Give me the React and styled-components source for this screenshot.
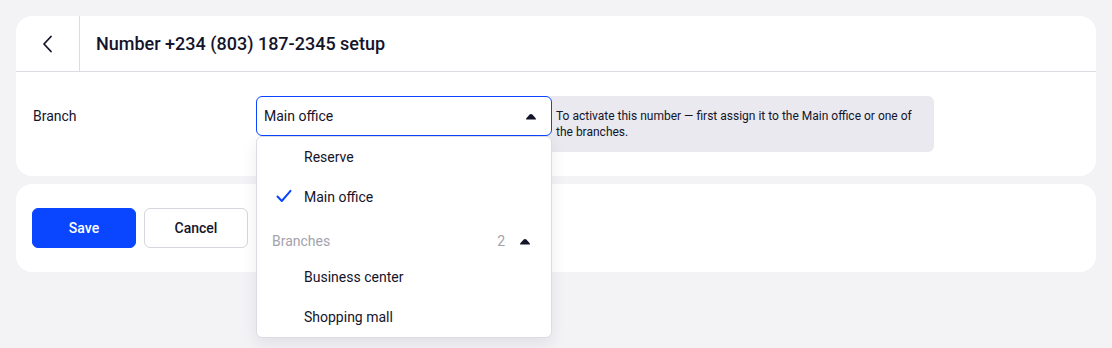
import React from 'react';
import styled, { createGlobalStyle } from 'styled-components';

const GlobalStyle = createGlobalStyle`
  html, body {
    margin: 0;
    padding: 0;
    background: #f3f3f6;
    font-family: Roboto, "Liberation Sans", sans-serif;
    color: #14142b;
  }
  * { box-sizing: border-box; }
`;

const Page = styled.div`
  min-height: 100vh;
  padding: 16px;
  display: flex;
  flex-direction: column;
  gap: 8px;
`;

const Card = styled.div`
  background: #ffffff;
  border-radius: 16px;
`;

const Header = styled.div`
  display: flex;
  align-items: stretch;
  height: 56px;
  border-bottom: 1px solid #dcdce2;
`;

const BackButton = styled.button`
  width: 64px;
  border: none;
  border-right: 1px solid #dcdce2;
  background: transparent;
  display: flex;
  align-items: center;
  justify-content: center;
  padding: 0;
  cursor: pointer;
  color: #14142b;
`;

const Title = styled.h1`
  margin: 0;
  padding-left: 16px;
  display: flex;
  align-items: center;
  font-size: 18px;
  font-weight: 500;
  color: #14142b;
`;

const Body = styled.div`
  padding: 24px 16px;
  display: flex;
  align-items: flex-start;
`;

const Label = styled.div`
  width: 224px;
  padding-left: 1px;
  height: 40px;
  display: flex;
  align-items: center;
  font-size: 14px;
`;

const SelectWrap = styled.div`
  position: relative;
  width: 296px;
  z-index: 2;
`;

const SelectBox = styled.div`
  height: 40px;
  border: 1px solid #0a46ff;
  border-radius: 6px;
  background: #ffffff;
  display: flex;
  align-items: center;
  justify-content: space-between;
  padding: 0 14px 0 7px;
  font-size: 14px;
`;

const Menu = styled.div`
  position: absolute;
  top: 40px;
  left: 0;
  width: 296px;
  background: #ffffff;
  border: 1px solid #dcdce2;
  border-radius: 6px;
  box-shadow: 0 6px 16px rgba(20, 20, 43, 0.08);
`;

const Option = styled.div`
  height: 40px;
  display: flex;
  align-items: center;
  padding-left: 47px;
  position: relative;
  font-size: 14px;
  color: #14142b;
`;

const Check = styled.span`
  position: absolute;
  left: 19px;
  top: 12px;
  display: flex;
`;

const GroupHeader = styled.div`
  margin-top: 8px;
  height: 32px;
  display: flex;
  align-items: center;
  padding: 0 20px 0 15px;
  font-size: 14px;
  color: #a3a3ae;
`;

const GroupName = styled.span`
  flex: 1;
`;

const GroupCount = styled.span`
  margin-right: 14px;
`;

const Info = styled.div`
  width: 389px;
  margin-left: -7px;
  padding: 12px 16px 12px 11px;
  background: #e9e9ef;
  border-radius: 6px;
  font-size: 12px;
  line-height: 16px;
  color: #14142b;
  min-height: 56px;
`;

const Actions = styled.div`
  padding: 24px 16px;
  display: flex;
  gap: 8px;
`;

const Button = styled.button`
  width: 104px;
  height: 40px;
  border-radius: 6px;
  font-family: inherit;
  font-size: 14px;
  font-weight: 500;
  cursor: pointer;
  border: 1px solid ${(p) => (p.$primary ? '#0a46ff' : '#d6d6de')};
  background: ${(p) => (p.$primary ? '#0a46ff' : '#ffffff')};
  color: ${(p) => (p.$primary ? '#ffffff' : '#14142b')};
`;

const Caret = () => (
  <svg width="12" height="7" viewBox="0 0 12 7">
    <path d="M1 6.5 Q1 5.2 2.2 4.2 L4.6 1.6 Q6 0.2 7.4 1.6 L9.8 4.2 Q11 5.2 11 6.5 Z" fill="#14142b" />
  </svg>
);

const App = () => {
  return (
    <>
      <GlobalStyle />
      <Page>
        <Card>
          <Header>
            <BackButton aria-label="Back">
              <svg width="16" height="18" viewBox="0 0 16 18">
                <path d="M11 1.5 L4 9 L11 16.5" fill="none" stroke="#14142b" strokeWidth="1.8" strokeLinecap="round" strokeLinejoin="round" />
              </svg>
            </BackButton>
            <Title>Number +234 (803) 187-2345 setup</Title>
          </Header>
          <Body>
            <Label>Branch</Label>
            <SelectWrap>
              <SelectBox>
                <span>Main office</span>
                <Caret />
              </SelectBox>
              <Menu>
                <Option>Reserve</Option>
                <Option>
                  <Check>
                    <svg width="16" height="14" viewBox="0 0 16 14">
                      <path d="M1.5 7.5 L5.8 12 L14.5 1.8" fill="none" stroke="#0a46ff" strokeWidth="2" strokeLinecap="round" strokeLinejoin="round" />
                    </svg>
                  </Check>
                  Main office
                </Option>
                <GroupHeader>
                  <GroupName>Branches</GroupName>
                  <GroupCount>2</GroupCount>
                  <Caret />
                </GroupHeader>
                <Option>Business center</Option>
                <Option>Shopping mall</Option>
              </Menu>
            </SelectWrap>
            <Info>
              To activate this number — first assign it to the Main office or one of the branches.
            </Info>
          </Body>
        </Card>
        <Card>
          <Actions>
            <Button $primary>Save</Button>
            <Button>Cancel</Button>
          </Actions>
        </Card>
      </Page>
    </>
  );
};

export default App;
